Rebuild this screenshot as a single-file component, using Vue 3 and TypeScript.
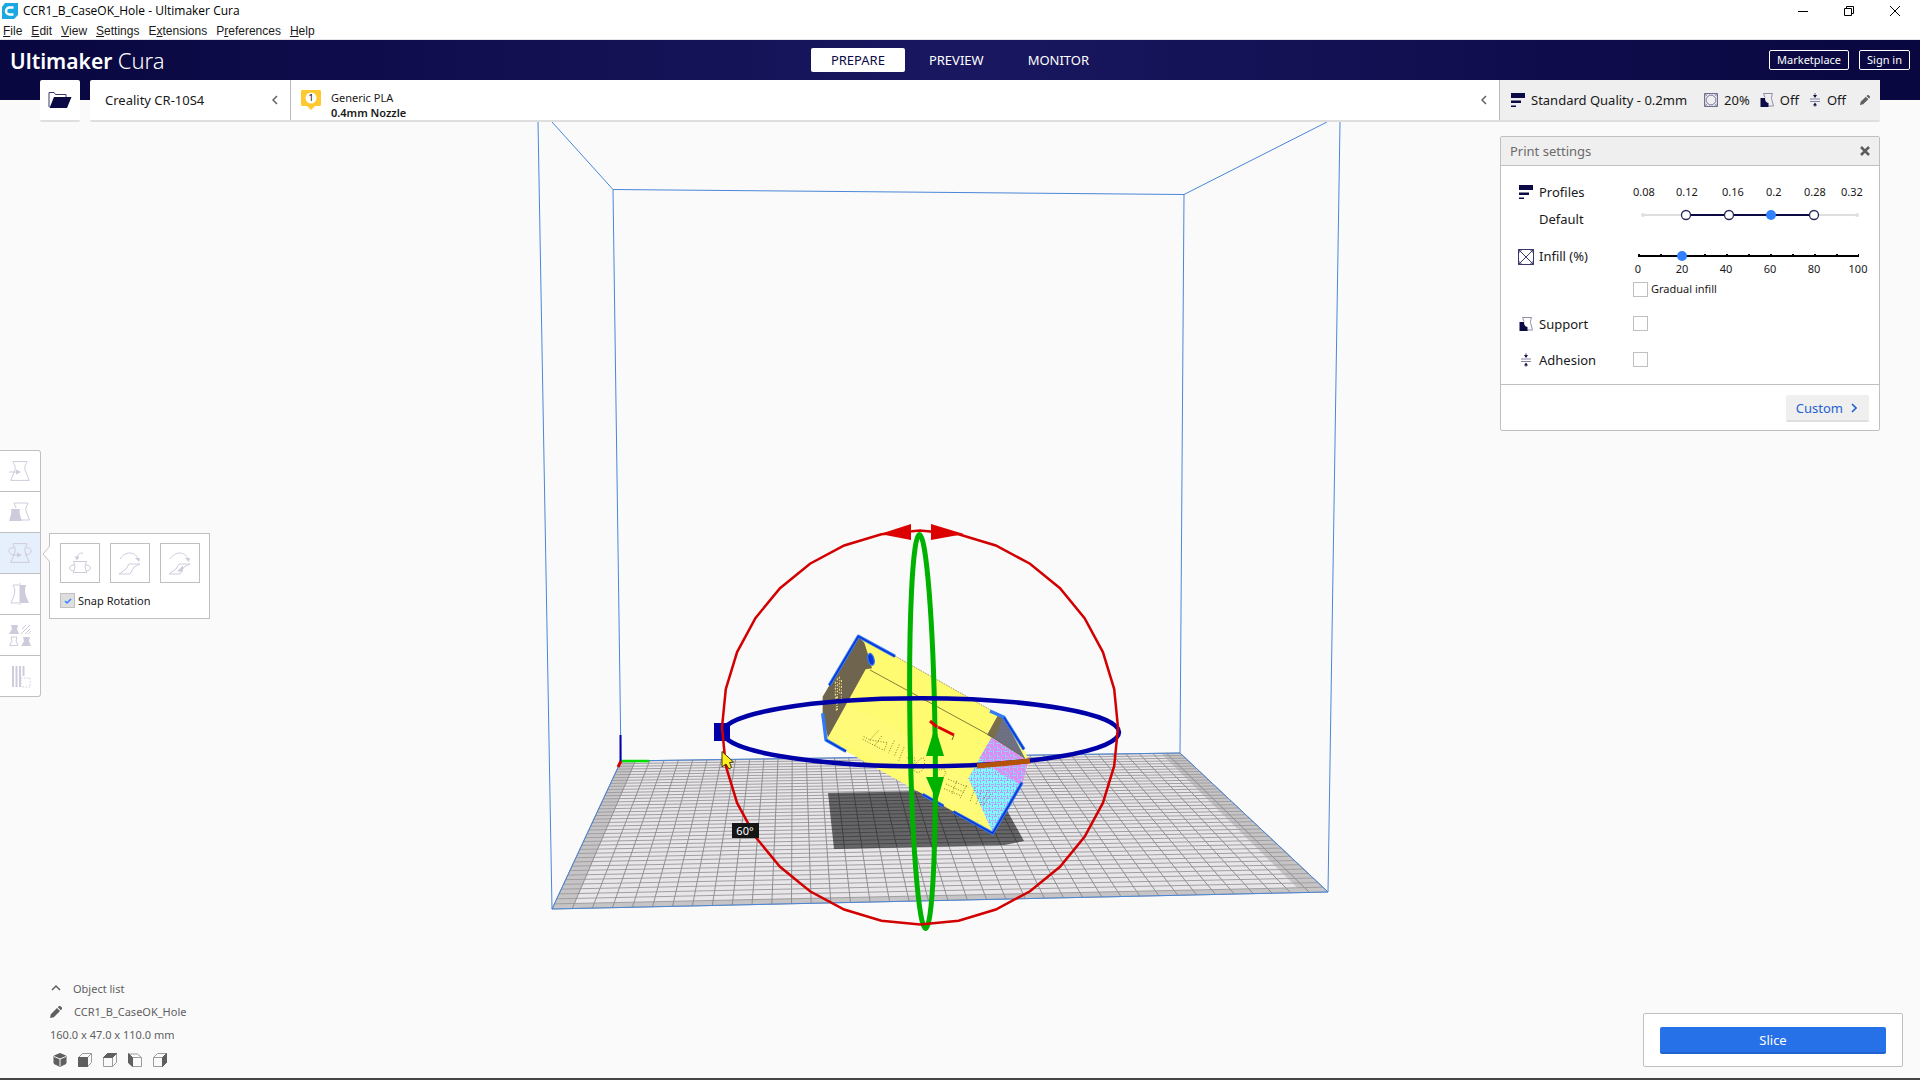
<script setup lang="ts">
import { computed, ref } from 'vue'

type Point = [number, number]

const menus = [
  { key: 'F', before: '', after: 'ile' },
  { key: 'E', before: '', after: 'dit' },
  { key: 'V', before: '', after: 'iew' },
  { key: 'S', before: '', after: 'ettings' },
  { key: 'x', before: 'E', after: 'tensions' },
  { key: 'r', before: 'P', after: 'eferences' },
  { key: 'H', before: '', after: 'elp' },
]

const stages = ['PREPARE', 'PREVIEW', 'MONITOR']
const activeStage = ref('PREPARE')

const tools = ['Move', 'Scale', 'Rotate', 'Mirror', 'Per model settings', 'Support blocker']
const activeTool = ref('Rotate')

const layerHeights = ['0.08', '0.12', '0.16', '0.2', '0.28', '0.32']
const profile = ref(3)
const infill = ref(20)
const infillMarks = [0, 20, 40, 60, 80, 100]
const gradual = ref(false)
const support = ref(false)
const adhesion = ref(false)
const snap = ref(true)

const views = ['3D', 'Front', 'Top', 'Left', 'Right']

// Build plate corners on screen: back left, back right, front right, front left
const plate: Point[] = [[621, 761], [1180, 753], [1328, 892], [552, 909]]
const cells = 40

// Projects a plate coordinate (u, v in 0..1) to the screen
const project = (() => {
  const [[x0, y0], [x1, y1], [x2, y2], [x3, y3]] = plate
  const dx1 = x1 - x2, dx2 = x3 - x2, dx3 = x0 - x1 + x2 - x3
  const dy1 = y1 - y2, dy2 = y3 - y2, dy3 = y0 - y1 + y2 - y3
  const det = dx1 * dy2 - dx2 * dy1
  const g = (dx3 * dy2 - dx2 * dy3) / det
  const h = (dx1 * dy3 - dx3 * dy1) / det
  const a = x1 - x0 + g * x1, b = x3 - x0 + h * x3
  const d = y1 - y0 + g * y1, e = y3 - y0 + h * y3
  return (u: number, v: number): Point => {
    const w = g * u + h * v + 1
    return [(a * u + b * v + x0) / w, (d * u + e * v + y0) / w]
  }
})()

const poly = (pts: Point[]) => pts.map(([x, y]) => `${x.toFixed(1)},${y.toFixed(1)}`).join(' ')
const segment = (p: Point, q: Point) => `M${p[0].toFixed(1)} ${p[1].toFixed(1)}L${q[0].toFixed(1)} ${q[1].toFixed(1)}`

const steps = Array.from({ length: cells + 1 }, (_, i) => i / cells)
const rows = computed(() => steps.map(t => segment(project(0, t), project(1, t))).join(''))
const columns = computed(() => steps.map(t => segment(project(t, 0), project(t, 1))).join(''))
const printable = poly([
  project(1 / cells, 0.3 / cells),
  project(1 - 1.4 / cells, 0.3 / cells),
  project(1 - 1.4 / cells, 1 - 1 / cells),
  project(1 / cells, 1 - 1 / cells),
])

const ring = poly(
  Array.from({ length: 32 }, (_, i): Point => {
    const t = (i * Math.PI) / 16
    return [920 + 198 * Math.sin(t), 727.5 - 197 * Math.cos(t)]
  }),
)
</script>

<template>
  <div class="app">
    <svg class="defs" aria-hidden="true">
      <symbol id="vase" viewBox="0 0 20 20">
        <path d="M3 .6h14c-1 3-3 5-2 8 1 4 3 7 4.4 10.8H.6C2 15.6 4 12.6 5 8.6 6 5.6 4 3.6 3 .6z" />
      </symbol>
      <symbol id="bars" viewBox="0 0 14 14">
        <path d="M0 0h14v5H0zM0 7.5h10V10H0zM0 12.5h5V14H0z" fill="#0b0a45" />
      </symbol>
      <symbol id="infill" viewBox="0 0 16 16">
        <path d="M.5.5h15v15H.5zM.5.5l15 15M15.5.5l-15 15M.5 4L4 .5M12 .5L15.500 4M.5 12L4 15.500M15.500 12L12 15.500" fill="none" stroke="#3a3868" />
      </symbol>
      <symbol id="infill-small" viewBox="0 0 14 14">
        <path d="M.5.5h13v13H.5z" fill="none" stroke="#6c6b8c" />
        <path d="M5 2.500h4L11.500 5v4L9 11.500H5L2.500 9V5zM.5.5l3 3M13.500.5l-3 3M.5 13.500l3-3M13.500 13.500l-3-3M.5 7L7 .5L13.500 7L7 13.500zM.5 4L4 .5M10 .5L13.500 4M.5 10L4 13.500M13.500 10L10 13.500" fill="none" stroke="#8a89a6" stroke-width=".8" />
      </symbol>
      <symbol id="support" viewBox="0 0 14 14">
        <path d="M3.500.5h9c-1 3-1.500 4.500-.5 7l1.500 5.500H8" fill="none" stroke="#8f8ea8" />
        <path d="M3.500.5l1.500 4" fill="none" stroke="#8f8ea8" />
        <path d="M.5 5H5c0 3 1 4.500 3.500 5V14h-8z" fill="#0b0a45" />
      </symbol>
      <symbol id="adhesion" viewBox="0 0 12 14">
        <path d="M1 6h10M1 8.500h10" stroke="#77769a" stroke-width=".9" />
        <path d="M6 0v3M6 11v3" stroke="#6c6b8c" />
        <path d="M4 2h4L6 5zM4 12.500h4l-2-3z" fill="#0b0a45" />
      </symbol>
      <symbol id="pencil" viewBox="0 0 12 12">
        <path d="M0 12l.8-3.800L7 2l3 3-6.200 6.200zM7.800 1.200L9 0h1.200L12 1.800V3l-1.200 1.200z" fill="#5f5f5f" />
      </symbol>
    </svg>

    <div class="titlebar">
      <svg class="app-icon" viewBox="0 0 16 16" aria-hidden="true">
        <path d="M3 0h13v12l-4 4H0V4z" fill="#1ba8e0" />
        <path d="M11.500 4.500H7.500a3 3 0 0 0 0 7h4" fill="none" stroke="#fff" stroke-width="2.400" />
      </svg>
      <span class="title">CCR1_B_CaseOK_Hole - Ultimaker Cura</span>
      <div class="window-controls">
        <button type="button" aria-label="Minimize">
          <svg viewBox="0 0 12 12"><path d="M1 6.500h10" stroke="#000" /></svg>
        </button>
        <button type="button" aria-label="Restore">
          <svg viewBox="0 0 12 12"><path d="M1.500 3.500h7v7h-7zM3.500 3.500v-2h7v7h-2" fill="none" stroke="#000" /></svg>
        </button>
        <button type="button" aria-label="Close">
          <svg viewBox="0 0 12 12"><path d="M1 1l10 10M11 1L1 11" stroke="#000" /></svg>
        </button>
      </div>
    </div>

    <nav class="menubar">
      <button v-for="m in menus" :key="m.key" type="button">{{ m.before }}<u>{{ m.key }}</u>{{ m.after }}</button>
    </nav>

    <header class="header">
      <div class="logo"><strong>Ultimaker</strong> <span>Cura</span></div>
      <nav class="stages">
        <button
          v-for="s in stages"
          :key="s"
          type="button"
          :class="{ active: s === activeStage }"
          @click="activeStage = s"
        >{{ s }}</button>
      </nav>
      <div class="account">
        <button type="button">Marketplace</button>
        <button type="button">Sign in</button>
      </div>
    </header>

    <div class="stage-menu">
      <button class="open-file" type="button" aria-label="Open file">
        <svg width="24" height="18" viewBox="0 0 24 18">
          <path d="M1 16V1.500h5l1.500 2H18V6" fill="none" stroke="#3a3868" />
          <path d="M6 6h17.500L19 17H1.500z" fill="#0b0a45" />
        </svg>
      </button>
      <div class="selectors">
        <button class="machine" type="button">
          <span>Creality CR-10S4</span>
          <svg class="chevron" viewBox="0 0 6 10"><path d="M5 1L1 5l4 4" /></svg>
        </button>
        <button class="material" type="button">
          <svg width="20" height="20" viewBox="0 0 20 20" aria-hidden="true">
            <path d="M1 0h18l1 1v14l-1 1h-5l-4 4-4-4H1l-1-1V1z" fill="#fec82f" />
            <circle cx="10" cy="8" r="5.500" fill="#fff" />
            <text x="10" y="11" text-anchor="middle" class="badge">1</text>
          </svg>
          <span class="material-name">Generic PLA<b>0.4mm Nozzle</b></span>
          <svg class="chevron" viewBox="0 0 6 10"><path d="M5 1L1 5l4 4" /></svg>
        </button>
        <button class="summary" type="button">
          <svg width="14" height="14"><use href="#bars" /></svg>
          <span class="quality">Standard Quality - 0.2mm</span>
          <svg width="14" height="14"><use href="#infill-small" /></svg>
          <span>20%</span>
          <svg width="14" height="14"><use href="#support" /></svg>
          <span>Off</span>
          <svg width="12" height="14"><use href="#adhesion" /></svg>
          <span>Off</span>
          <svg class="edit" width="10" height="10"><use href="#pencil" /></svg>
        </button>
      </div>
    </div>

    <main class="viewport">
      <svg class="scene" viewBox="0 122 1920 956" preserveAspectRatio="xMidYMin slice" aria-label="Build plate">
        <defs>
          <pattern id="cyan-mesh" width="18" height="18" patternUnits="userSpaceOnUse">
            <rect width="18" height="18" fill="#7dfbff" />
            <path d="M0 1.500h9M13.500 0v9M3 10.500h3M9 13.500h9M4.500 12v6" stroke="#b49cf6" stroke-width="3" fill="none" />
          </pattern>
          <pattern id="pink-mesh" width="24" height="24" patternUnits="userSpaceOnUse">
            <rect width="24" height="24" fill="#dc8df2" />
            <path d="M0 4.500h12M16.500 0v12M4.500 12v9h9M18 16.500h6" stroke="#8fd4ff" stroke-width="3" fill="none" />
          </pattern>
          <pattern id="grey-mesh" width="9" height="9" patternUnits="userSpaceOnUse">
            <rect width="9" height="9" fill="#7b6f7e" />
            <path d="M0 1.500h6M7.500 3v6" stroke="#5d7187" stroke-width="3" />
          </pattern>
        </defs>

        <!-- build plate -->
        <polygon :points="poly(plate)" fill="#c6c4c5" />
        <polygon :points="printable" fill="#e9e6ea" />
        <path :d="rows" class="grid-row" />
        <path :d="columns" class="grid-column" />
        <polygon points="828,793 924,791 1003,803 1024,841 1005,845 834,849" fill="#000" fill-opacity=".56" />

        <!-- build volume -->
        <g class="volume">
          <polygon :points="poly(plate)" />
          <path d="M613 189.500L1184 194.500M613 189.500L621 761M1184 194.500L1180 753M538 122L552 909M1340 122L1328 892M552 122L613 189.500M1327 122L1184 194.500" />
        </g>
        <path d="M620.500 735v26" stroke="#0000b0" stroke-width="2" />
        <path d="M622 761h27" stroke="#00e000" stroke-width="2.500" />
        <path d="M621 761l-3 6" stroke="#c80000" stroke-width="3" />

        <!-- model -->
        <g transform="translate(700 510) scale(.33333)">
          <polygon points="475,378 585,438 875,602 912,620 972,718 988,755 965,820 878,972 668,852 435,722 378,690 368,620 368,560 390,525" fill="#fffb70" />
          <polygon points="384,680 550,760 878,960 805,805 560,640 440,590" fill="#fffa78" />
          <polygon points="475,378 493,398 503,430 516,475 497,478 384,682 368,620 368,560" fill="#6f654f" />
          <path d="M406 515v55M412 505v95M418 500v50M424 510v65M409 560v45" stroke="#fff48a" stroke-width="3" stroke-dasharray="6 5 3 4" />
          <path d="M415 515v70" stroke="#b03020" stroke-width="3" stroke-dasharray="3 21" />
          <polygon points="893,618 912,622 975,745 862,674" fill="url(#grey-mesh)" />
          <polygon points="893,618 906,628 884,684 862,674" fill="#7a6d49" />
          <polygon points="875,682 986,752 965,822 878,968 805,805" fill="url(#cyan-mesh)" />
          <polygon points="875,682 986,752 965,828 900,790 838,745" fill="url(#pink-mesh)" />
          <path d="M510 480L865 674L975 745" fill="none" stroke="#6b632f" stroke-width="2.500" />
          <path d="M585 438L875 602" stroke="#8f874a" stroke-width="2.500" stroke-dasharray="5 3" />
          <g fill="none" stroke="#665e20" stroke-width="2.500" stroke-dasharray="3 5">
            <path d="M535 662l-25 28-22-12M488 688l65 34M510 690l52 8-10 24M545 678l-22 30M583 692l-18 38M598 704l-16 36M612 712l-16 40" />
            <path d="M622 744l14-6 10 8-4 14M650 758q24-28 24 0-4 34-28 28-12-14 4-28zM716 780l16-4 6 14-14 18" />
            <path d="M745 808l60 24M738 822l56 26M732 836l52 22M770 812l-14 40M800 826l-20 40" />
            <path d="M826 832l-16 44M844 842l-16 40M865 840l-24 46M872 852l-26 40" />
          </g>
          <g fill="none" stroke-linejoin="round">
            <path d="M388 526L475 379L585 439M368 610L378 690L438 724M870 603L912 622L972 718M966 818L878 970L760 905M730 888L668 853" stroke="#2f7cf6" stroke-width="10" />
            <path d="M388 526L475 379L585 439M378 690L438 724M912 622L972 718M966 818L878 970L760 905M730 888L668 853" stroke="#0c2fd0" stroke-width="4" />
          </g>
          <ellipse cx="513" cy="448" rx="9" ry="18" transform="rotate(-15 513 448)" fill="#0a36d8" stroke="#2f7cf6" stroke-width="4" />
        </g>

        <!-- rotation handles -->
        <ellipse cx="922.500" cy="731.500" rx="12.500" ry="197" transform="rotate(-.9 922 731)" class="ring-green" />
        <path d="M935 727l9 29h-18zM926 777h18l-7 25z" fill="#00b200" />
        <ellipse cx="921" cy="732.300" rx="198" ry="34" class="ring-blue" />
        <path d="M714 723h16v18h-16z" fill="#0000a8" />
        <path d="M977 766l53-5" stroke="#b45208" stroke-width="5" />
        <path d="M930 721l7 6M938 727l16 8" stroke="#dc0000" stroke-width="3" />
        <path d="M954 735l-2 5" stroke="#6b632f" />
        <polygon :points="ring" class="ring-red" />
        <path d="M880 534l31-10v16zM964 534l-33-10v16z" fill="#dc0000" />

        <rect x="732" y="823" width="27" height="15" fill="#161616" />
        <text x="745" y="835" text-anchor="middle" class="angle">60°</text>
        <path d="M722 751.500v15.500l4-3 3 5 2.500-1.500-2-5 4-.5z" fill="#ffee20" stroke="#3a3400" />
      </svg>

      <section class="panel" aria-label="Print settings">
        <div class="panel-head">
          <span>Print settings</span>
          <button type="button" aria-label="Close print settings">
            <svg width="10" height="10" viewBox="0 0 10 10"><path d="M1 1l8 8M9 1L1 9" stroke="#5c5c5c" stroke-width="2.500" /></svg>
          </button>
        </div>
        <div class="panel-body">
          <svg class="icon" width="14" height="14"><use href="#bars" /></svg>
          <div class="name stack">
            <label for="profile">Profiles</label>
            <span>Default</span>
          </div>
          <div class="profile-field">
            <div class="heights"><span v-for="h in layerHeights" :key="h">{{ h }}</span></div>
            <div class="slider profile-slider">
              <svg width="224" height="12" viewBox="0 0 224 12" aria-hidden="true">
                <path d="M5 6h214" stroke="#dedede" stroke-width="2" />
                <path d="M48 6h128" stroke="#0b0a45" stroke-width="2" />
                <g fill="#dedede"><circle cx="5" cy="6" r="2" /><circle cx="219" cy="6" r="2" /></g>
                <g fill="#fff" stroke="#2a2858" stroke-width="1.300">
                  <circle cx="48" cy="6" r="4.500" /><circle cx="91" cy="6" r="4.500" /><circle cx="176" cy="6" r="4.500" />
                </g>
              </svg>
              <input id="profile" v-model.number="profile" type="range" min="0" max="5" />
            </div>
          </div>

          <svg class="icon wide" width="16" height="16"><use href="#infill" /></svg>
          <label class="name" for="infill-range">Infill (%)</label>
          <div class="infill-field">
            <div class="slider infill-slider">
              <svg width="230" height="12" viewBox="0 0 230 12" aria-hidden="true">
                <path d="M5 6h220" stroke="#000" stroke-width="2" />
                <path d="M5 5.500h221" stroke="#000" stroke-width="3" stroke-dasharray="2 20" />
              </svg>
              <input id="infill-range" v-model.number="infill" type="range" min="0" max="100" step="10" />
            </div>
            <div class="marks"><span v-for="n in infillMarks" :key="n">{{ n }}</span></div>
            <label class="check"><input v-model="gradual" type="checkbox" /><span>Gradual infill</span></label>
          </div>

          <svg class="icon" width="14" height="14"><use href="#support" /></svg>
          <label class="name" for="support-box">Support</label>
          <div class="check"><input id="support-box" v-model="support" type="checkbox" /></div>

          <svg class="icon" width="14" height="14"><use href="#adhesion" /></svg>
          <label class="name" for="adhesion-box">Adhesion</label>
          <div class="check"><input id="adhesion-box" v-model="adhesion" type="checkbox" /></div>
        </div>
        <div class="panel-foot">
          <button type="button">
            Custom
            <svg width="6" height="10" viewBox="0 0 6 10"><path d="M1 1l4 4-4 4" fill="none" stroke="#1f62d0" stroke-width="1.600" /></svg>
          </button>
        </div>
      </section>

      <div class="tools">
        <div class="toolbar">
          <button
            v-for="(t, i) in tools"
            :key="t"
            type="button"
            :aria-label="t"
            :class="{ active: t === activeTool }"
            @click="activeTool = t"
          >
            <svg width="22" height="22" viewBox="0 0 22 22" class="tool">
              <template v-if="i === 0">
                <use href="#vase" x="1" y="1" width="20" height="20" />
                <path d="M0 12h9" /><path d="M7 9.500l5 2.500-5 2.500z" class="solid" />
              </template>
              <template v-else-if="i === 1">
                <path d="M5 2h14c-1 3-3 5-2 8l3.500 9H12M5 2l2 5" />
                <path d="M2 8h9c-1 3 0 6 2 12H0C2 14 3 11 2 8z" class="solid" />
              </template>
              <template v-else-if="i === 2">
                <use href="#vase" x="1" y="1" width="20" height="20" />
                <path d="M5 6C2 5 0 7 0 9s2 4 6 4h4M17 6c3-1 5 1 5 3s-2 4-6 4" /><path d="M8 10.500l5 2.500-5 2.500z" class="solid" />
              </template>
              <template v-else-if="i === 3">
                <path d="M10 2H4c3 6 2 9-2 18h8M11 0v22" />
                <path d="M11 2h6c-2 6-1 9 3 18h-9z" class="solid" />
              </template>
              <template v-else-if="i === 4">
                <path d="M2 1h7l-1 4 2 5H0l3-5zM14 13h7l-1 4 2 5H12l3-5z" class="solid" />
                <path d="M2 13h6l-1 4 2 4.500H.5L3 17z" />
                <path d="M12 10l9-9M13 5l4-4M16 10l5-5M19 10l3-3" />
              </template>
              <template v-else>
                <path d="M4 1v21M7.500 1v21M11 1v21M14.500 1v10" stroke-width="2" />
                <rect x="12" y="13" width="9" height="9" stroke-dasharray="1.500 1.500" />
              </template>
            </svg>
          </button>
        </div>
        <div class="popup">
          <svg class="pointer" width="8" height="16" viewBox="0 0 8 16" aria-hidden="true">
            <path d="M8 0L1 8l7 8" fill="#fff" stroke="#c0c0c0" />
          </svg>
          <div class="actions">
            <button type="button" aria-label="Reset">
              <svg width="22" height="22" viewBox="0 0 22 22" class="tool">
                <path d="M4.500 9.500h13l-1.500 5 1.500 6h-13l1.500-6zM5 13c-6 0-6 6 0 6M17 13c6 0 6 6 0 6M14 1C10 1 8 3 8 6" /><path d="M5.500 4.500h5L8 8.500z" class="solid" />
              </svg>
            </button>
            <button type="button" aria-label="Lay flat">
              <svg width="22" height="22" viewBox="0 0 22 22" class="tool">
                <path d="M1 7C6-1 16-1 19 7M10 12h11l-6 3-4 7H0l7-5z" /><path d="M16 6h5l-1 4z" class="solid" />
              </svg>
            </button>
            <button type="button" aria-label="Select face to align to the build plate">
              <svg width="22" height="22" viewBox="0 0 22 22" class="tool">
                <path d="M1 7C6-1 16-1 19 7M10 12h11l-6 3-4 7H0l7-5z" /><path d="M16 6h5l-1 4zM14 13.500v6H8z" class="solid" />
              </svg>
            </button>
          </div>
          <label class="check snap"><input v-model="snap" type="checkbox" disabled /><span>Snap Rotation</span></label>
        </div>
      </div>

      <footer class="bottom">
        <div class="object-info">
          <button class="line" type="button">
            <svg width="12" height="12" viewBox="0 0 12 12"><path d="M2 7l4-4 4 4" fill="none" stroke="#5f5f5f" stroke-width="1.500" /></svg>
            <span>Object list</span>
          </button>
          <button class="line name-line" type="button">
            <svg width="12" height="12" viewBox="0 0 12 12"><use href="#pencil" /></svg>
            <span>CCR1_B_CaseOK_Hole</span>
          </button>
          <p>160.0 x 47.0 x 110.0 mm</p>
          <div class="views">
            <button v-for="(v, i) in views" :key="v" type="button" :aria-label="v + ' view'">
              <svg width="14" height="14" viewBox="0 0 14 14" class="cube">
                <template v-if="i === 0">
                  <path d="M7 .5l6 2.500v7.500L7 13.500 1 10.500V3z" class="face" /><path d="M1 3.500l6 2.500 6-2.500M7 6v7.500" stroke="#fafafa" />
                </template>
                <template v-else-if="i === 3">
                  <path d="M4.500 4.500h9v9h-9zM1 1h8.500l4 3.500" /><path d="M.5.5l4 4v9l-4-3.500z" class="face" />
                </template>
                <template v-else>
                  <path d="M.5 4.500h9v9h-9zM.5 4.500l4-4h9l-4 4M13.500.5v9l-4 4" />
                  <path v-if="i === 1" d="M.5 4.500h9v9h-9z" class="face" />
                  <path v-if="i === 2" d="M.5 4.500l4-4h9l-4 4z" class="face" />
                  <path v-if="i === 4" d="M9.500 4.500l4-4v9l-4 4z" class="face" />
                </template>
              </svg>
            </button>
          </div>
        </div>
        <div class="slice"><button type="button">Slice</button></div>
      </footer>
    </main>
  </div>
</template>

<style>
body {
  margin: 0;
  background: #fafafa;
}
</style>

<style scoped>
.app {
  display: flex;
  flex-direction: column;
  box-sizing: border-box;
  min-height: 100vh;
  border-bottom: 2px solid #454545;
  background: #fafafa;
  color: #191919;
  font: 13px/18px "Noto Sans", "Open Sans", sans-serif;
}
.defs {
  position: absolute;
  width: 0;
  height: 0;
}
button {
  display: flex;
  align-items: center;
  margin: 0;
  padding: 0;
  border: 0;
  background: none;
  color: inherit;
  font: inherit;
  white-space: nowrap;
}
svg {
  display: block;
  flex: none;
}

.titlebar {
  display: flex;
  align-items: center;
  height: 22px;
  padding: 0 2px;
  background: #fff;
  color: #000;
  font: 12px/18px "Open Sans", "Noto Sans", sans-serif;
}
.app-icon {
  width: 16px;
  height: 16px;
  margin-right: 5px;
}
.window-controls {
  display: flex;
  margin-left: auto;
}
.window-controls button {
  justify-content: center;
  width: 46px;
  height: 20px;
}
.window-controls svg {
  width: 12px;
  height: 12px;
}
.menubar {
  display: flex;
  gap: 9px;
  height: 17px;
  padding: 0 3px;
  border-bottom: 1px solid #e4e4ea;
  background: #fff;
  font: 12px/16px "Liberation Sans", Arial, sans-serif;
}

.header {
  display: grid;
  grid-template-columns: 1fr auto 1fr;
  align-items: start;
  height: 52px;
  padding: 8px 10px 0;
  margin-bottom: -20px;
  background: linear-gradient(90deg, #08073f, #191760 50%, #08073f);
  color: #fff;
}
.logo {
  font-size: 21px;
  font-weight: 300;
  line-height: 24px;
}
.logo strong {
  font-weight: 600;
}
.logo span {
  font-size: 22px;
}
.stages {
  display: flex;
  gap: 4px;
}
.stages button {
  height: 24px;
  padding: 0 20px;
  border-radius: 2px;
}
.stages .active {
  background: #fff;
  color: #0b0a45;
}
.account {
  display: flex;
  justify-content: flex-end;
  gap: 10px;
  padding-top: 2px;
  font-size: 11px;
}
.account button {
  height: 20px;
  padding: 0 7px;
  border: 1px solid #fff;
  border-radius: 2px;
}

.stage-menu {
  position: relative;
  display: flex;
  gap: 10px;
  height: 42px;
  padding: 0 40px;
}
.open-file,
.selectors {
  border-bottom: 2px solid #dedede;
  border-radius: 2px;
  background: #fff;
}
.open-file {
  justify-content: center;
  width: 40px;
}
.selectors {
  display: flex;
  flex: 1;
}
.machine {
  justify-content: space-between;
  width: 200px;
  padding: 0 12px 0 15px;
}
.chevron {
  width: 6px;
  height: 10px;
  fill: none;
  stroke: #5f5f5f;
  stroke-width: 1.5;
}
.material {
  flex: 1;
  gap: 10px;
  padding: 0 12px 0 10px;
  border-left: 1px solid #b8b8b8;
  font-size: 11px;
  line-height: 15px;
  text-align: left;
}
.material-name {
  flex: 1;
  padding-top: 10px;
}
.material-name b {
  display: block;
  font-weight: 600;
}
.badge {
  font-size: 9px;
}
.summary {
  box-sizing: border-box;
  gap: 6px;
  width: 381px;
  padding: 0 10px 0 11px;
  border-left: 1px solid #b8b8b8;
  background: #efefef;
}
.summary span + svg {
  margin-left: 4px;
}
.summary .edit {
  margin-left: 8px;
}
.summary .quality {
  flex: 1;
  text-align: left;
}

.viewport {
  position: relative;
  display: flex;
  flex: 1;
  flex-direction: column;
  min-height: 720px;
  overflow: hidden;
}
.scene {
  position: absolute;
  inset: 0;
  width: 100%;
  height: 100%;
}
.grid-row {
  stroke: #a09ea1;
  stroke-width: 1;
}
.grid-column {
  stroke: #8e9092;
  stroke-width: 1;
}
.volume {
  fill: none;
  stroke: #4a86d8;
}
.ring-green {
  fill: none;
  stroke: #00b200;
  stroke-width: 5;
}
.ring-blue {
  fill: none;
  stroke: #0000a8;
  stroke-width: 4.5;
}
.ring-red {
  fill: none;
  stroke: #d20000;
  stroke-width: 2.5;
}
.angle {
  fill: #fff;
  font-size: 11px;
}

.panel {
  position: relative;
  box-sizing: border-box;
  align-self: flex-end;
  width: 380px;
  margin: 14px 40px 0 0;
  border: 1px solid #c0c0c0;
  border-radius: 2px;
  background: #fff;
}
.panel-head {
  display: flex;
  align-items: center;
  justify-content: space-between;
  height: 28px;
  padding: 0 9px;
  border-bottom: 1px solid #c0c0c0;
  background: #efefef;
  color: #6b6b6b;
}
.panel-body {
  display: grid;
  grid-template-columns: 20px 95px 1fr;
  grid-template-rows: 64px 68px 36px 33px;
  align-items: start;
  padding: 17px 16px 0 17px;
}
.icon {
  margin: 2px 0 0 1px;
}
.icon.wide {
  margin-left: 0;
}
.name {
  padding-left: 1px;
}
.stack {
  display: grid;
  gap: 9px;
}
.heights {
  display: grid;
  grid-template-columns: 43px 46px 44px 38px 37px 22px;
  font-size: 11px;
}
.slider {
  display: grid;
  height: 12px;
}
.slider > * {
  grid-area: 1 / 1;
}
.profile-slider {
  width: 224px;
  margin: 8px 0 0 5px;
}
.infill-slider {
  width: 230px;
  margin-top: 3px;
}
.slider input {
  appearance: none;
  width: 100%;
  height: 12px;
  margin: 0;
  background: none;
}
.slider input::-webkit-slider-thumb {
  appearance: none;
  width: 10px;
  height: 10px;
  border-radius: 50%;
  background: #3282ff;
}
.marks {
  display: grid;
  grid-template-columns: repeat(6, 44px);
  margin-left: -17px;
  font-size: 11px;
  line-height: 14px;
  text-align: center;
}
.check {
  display: flex;
  align-items: center;
  gap: 3px;
  font-size: 11px;
}
.check input {
  appearance: none;
  box-sizing: border-box;
  width: 15px;
  height: 15px;
  margin: 0;
  border: 1px solid #c0c0c0;
  background: #fff;
}
.panel-body > .check {
  padding-top: 1px;
}
.infill-field .check {
  height: 16px;
  margin-top: 5px;
}
.panel-foot {
  display: flex;
  justify-content: flex-end;
  padding: 10px 10px 8px;
  border-top: 1px solid #c0c0c0;
}
.panel-foot button {
  gap: 8px;
  height: 27px;
  padding: 0 12px 0 10px;
  border-bottom: 2px solid #dedede;
  border-radius: 2px;
  background: #efefef;
  color: #1f62d0;
}

.tools {
  position: relative;
  display: flex;
  align-items: flex-start;
  gap: 8px;
  margin-top: 19px;
}
.toolbar {
  box-sizing: border-box;
  width: 41px;
  border: 1px solid #c0c0c0;
  border-left: 0;
  border-radius: 0 3px 3px 0;
  background: #fff;
}
.toolbar button {
  box-sizing: content-box;
  justify-content: center;
  width: 40px;
  height: 40px;
}
.toolbar button + button {
  border-top: 1px solid #c0c0c0;
}
.toolbar .active {
  background: #e6effc;
}
.tool {
  overflow: visible;
  fill: none;
  stroke: #cfcbdc;
}
.tool .solid {
  fill: #cfcbdc;
  stroke: none;
}
.popup {
  position: relative;
  box-sizing: border-box;
  width: 161px;
  margin-top: 83px;
  padding: 9px 9px 10px 10px;
  border: 1px solid #c0c0c0;
  background: #fff;
}
.pointer {
  position: absolute;
  top: 12px;
  left: -8px;
}
.actions {
  display: flex;
  gap: 10px;
}
.actions button {
  box-sizing: border-box;
  justify-content: center;
  width: 40px;
  height: 40px;
  border: 1px solid #c0c0c0;
}
.snap {
  height: 15px;
  margin-top: 10px;
}
.snap input:checked {
  background: #dedede url("data:image/svg+xml,%3Csvg xmlns='http://www.w3.org/2000/svg' viewBox='0 0 8 8'%3E%3Cpath d='M1 4l2 2 4-4' fill='none' stroke='%233282ff' stroke-width='1.500'/%3E%3C/svg%3E") center / 8px no-repeat;
}

.bottom {
  position: relative;
  display: flex;
  align-items: flex-end;
  justify-content: space-between;
  margin-top: auto;
  padding: 0 17px 11px 50px;
}
.object-info {
  color: #5f5f5f;
  font-size: 11px;
}
.line {
  gap: 11px;
  height: 23px;
}
.name-line {
  gap: 12px;
}
.object-info p {
  margin: 3px 0 9px;
}
.views {
  display: flex;
  gap: 11px;
  padding: 0 0 0 3px;
}
.cube {
  fill: none;
  stroke: #9c9c9c;
}
.cube .face {
  fill: #5f5f5f;
  stroke: #5f5f5f;
}
.slice {
  width: 226px;
  padding: 13px 16px 12px;
  border: 1px solid #c0c0c0;
  border-radius: 2px;
  background: #fff;
}
.slice button {
  justify-content: center;
  width: 100%;
  height: 27px;
  border-bottom: 2px solid #1f62d0;
  border-radius: 2px;
  background: #2670e8;
  color: #fff;
}
</style>
